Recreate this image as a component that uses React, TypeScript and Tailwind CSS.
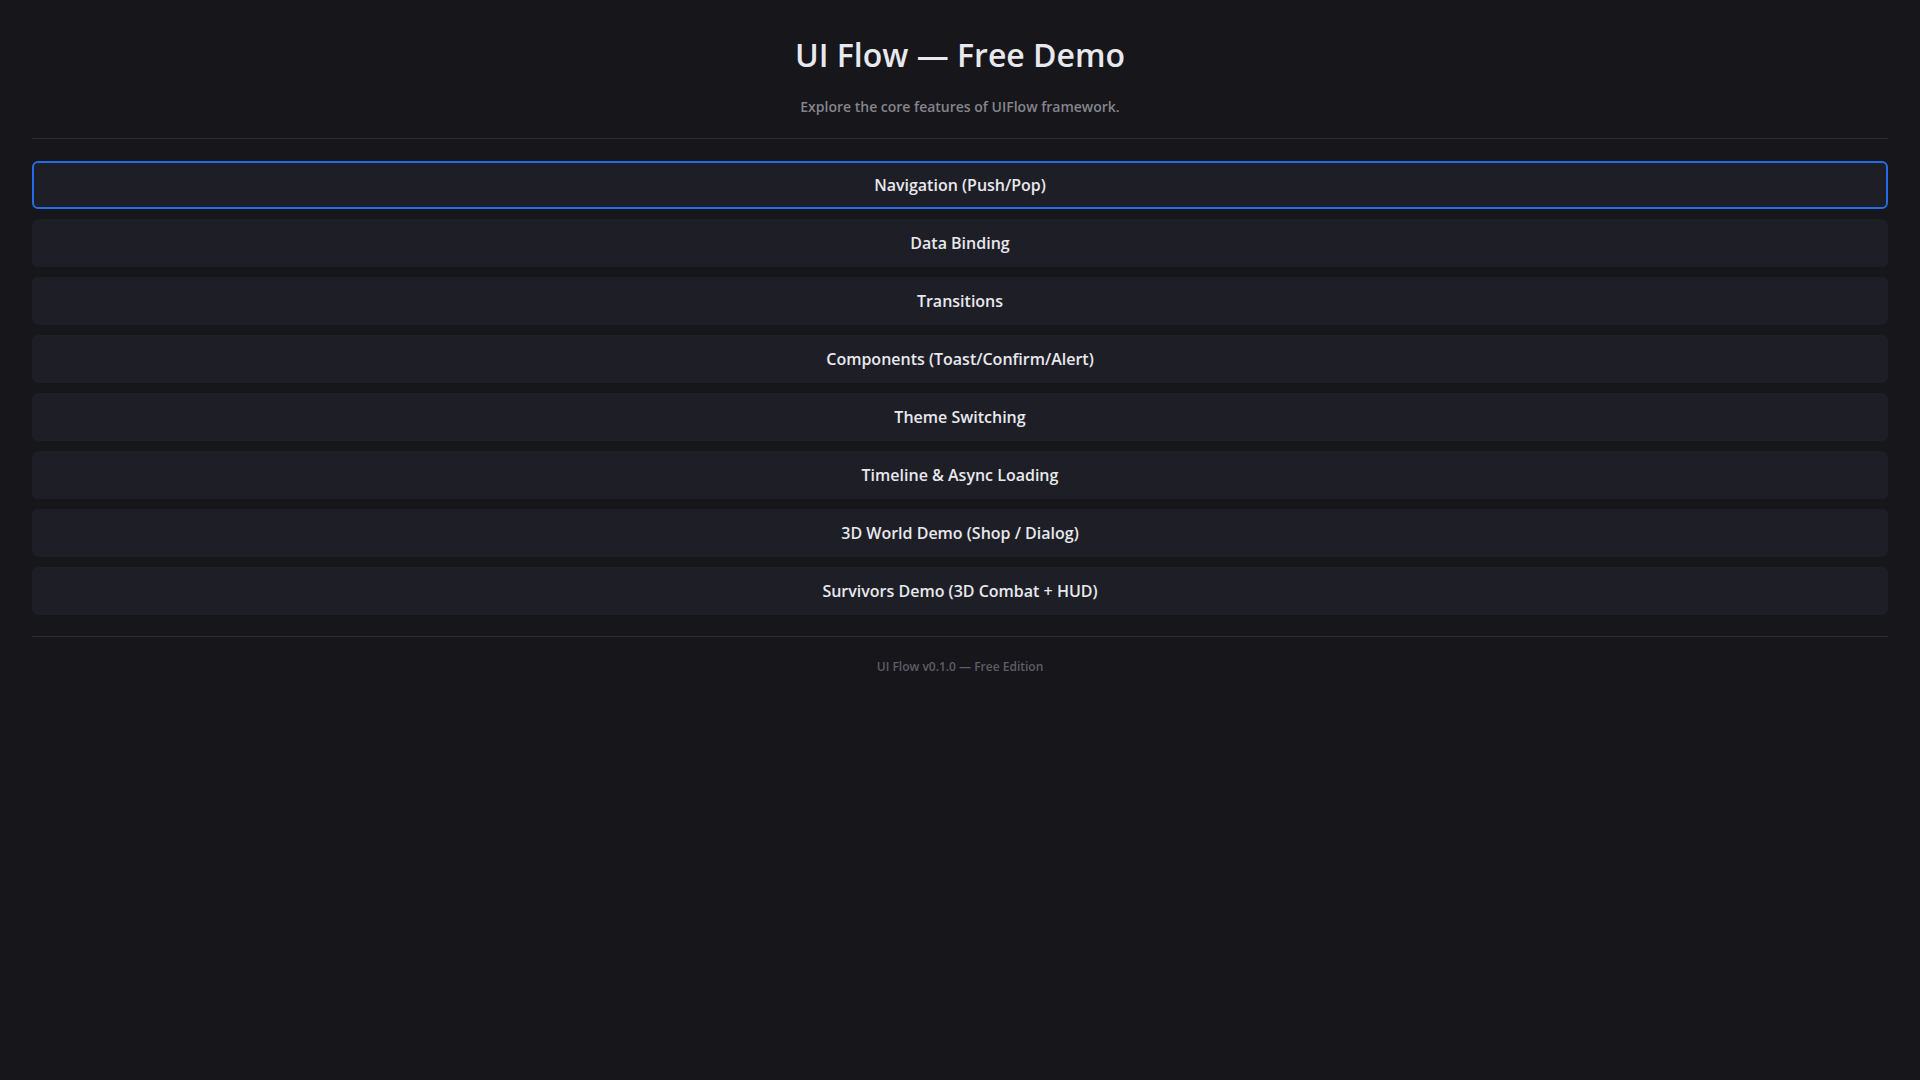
const demos = [
  "Navigation (Push/Pop)",
  "Data Binding",
  "Transitions",
  "Components (Toast/Confirm/Alert)",
  "Theme Switching",
  "Timeline & Async Loading",
  "3D World Demo (Shop / Dialog)",
  "Survivors Demo (3D Combat + HUD)",
];

export default function App() {
  return (
    <div className="min-h-screen bg-[#16161b] px-8 pt-[31px] font-['Open_Sans',sans-serif] text-[#e8e8ee]">
      {/* Header */}
      <header className="flex flex-col items-center border-b border-[#2c2c32] pb-[21px]">
        <h1 className="text-[32px] font-semibold leading-[48px]">UI Flow — Free Demo</h1>
        <p className="mt-[18px] text-sm font-semibold text-[#85858c]">
          Explore the core features of UIFlow framework.
        </p>
      </header>

      {/* Demo list */}
      <nav className="flex flex-col gap-[10px] border-b border-[#2c2c32] pb-[21px] pt-[22px]">
        {demos.map((label, i) => (
          <button
            key={label}
            className={
              i === 0
                ? "h-12 rounded-md border-2 border-[#256ae6] bg-[#1e1f26] text-base font-semibold text-[#e8e8ee]"
                : "h-12 rounded-md border-2 border-transparent bg-[#1e1f26] text-base font-semibold text-[#e8e8ee]"
            }
          >
            {label}
          </button>
        ))}
      </nav>

      {/* Footer */}
      <footer className="pt-[22px] text-center text-xs font-semibold text-[#5e5e66]">UI Flow v0.1.0 — Free Edition</footer>
    </div>
  );
}
